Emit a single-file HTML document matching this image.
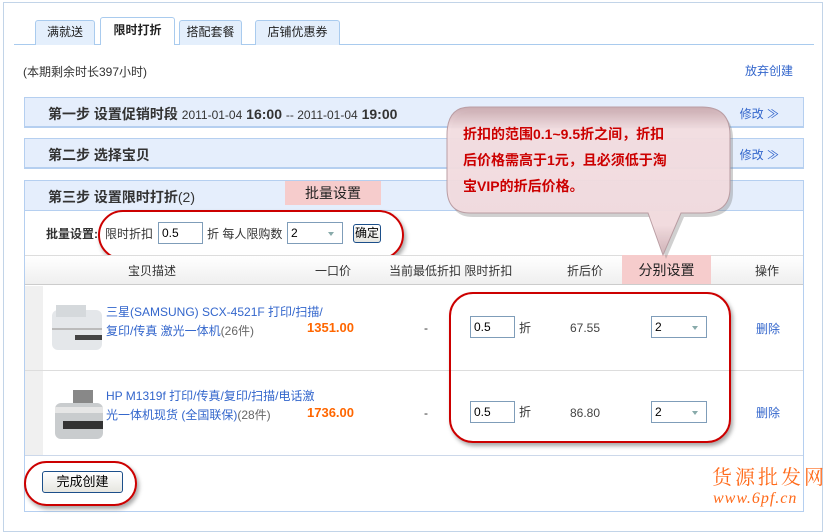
<!DOCTYPE html>
<html><head><meta charset="utf-8"><style>
*{margin:0;padding:0;box-sizing:border-box}
body{width:828px;height:519px;background:#fff;position:relative;overflow:hidden;font-family:"Liberation Sans","Noto Sans CJK SC",sans-serif;font-size:12px;color:#333}
.a{position:absolute;white-space:nowrap}
.tab{position:absolute;top:20px;height:25px;border:1px solid #a9cbee;border-bottom:none;background:#e4effc;border-radius:3px 3px 0 0;text-align:center;line-height:22px;font-size:12px;color:#222}
.step{position:absolute;left:24px;width:780px;height:31px;background:#e5eefc;border:1px solid #b5cff0;border-bottom:2px solid #b5cff0}
.step b{position:absolute;left:23px;top:6px;font-size:14px;color:#333}
.mod{position:absolute;right:24px;top:7px;color:#3366cc;font-size:12px}
.lnk{color:#3366cc}
.inp{position:absolute;height:22px;border:1px solid #7f9db9;background:#fff;padding-left:3px;line-height:20px;font-size:12px;color:#000}
.sel{position:absolute;height:22px;border:1px solid #7f9db9;background:#fff;padding-left:3px;line-height:20px;font-size:12px;color:#000}
.sel:after{content:"";position:absolute;right:8px;top:9px;border:3px solid transparent;border-top:4px solid #8aa;}
.oval{position:absolute;border:2px solid #c00;box-shadow:2px 3px 4px rgba(0,0,0,.35)}
.hl{position:absolute;background:#f6cccc;font-size:14px;color:#222;text-align:center}
.btn{position:absolute;border:1px solid #1c4f8a;border-radius:3px;background:linear-gradient(#fff,#e6e6e0);text-align:center;color:#000}
</style></head><body>
<div class="a" style="left:3px;top:2px;width:820px;height:530px;border:1px solid #c2d4e8"></div>
<div class="a" style="left:14px;top:44px;width:800px;height:1px;background:#a9cbee"></div>
<div class="tab" style="left:35px;width:60px">满就送</div>
<div class="tab" style="left:100px;width:75px;top:17px;height:28px;background:#fff;font-weight:bold;line-height:24px">限时打折</div>
<div class="tab" style="left:179px;width:63px">搭配套餐</div>
<div class="tab" style="left:255px;width:85px">店铺优惠券</div>
<div class="a" style="left:23px;top:63px;color:#333">(本期剩余时长397小时)</div>
<div class="a lnk" style="left:745px;top:62px">放弃创建</div>

<div class="step" style="top:97px"><b>第一步 设置促销时段 <span style="font-weight:normal;font-size:12px">2011-01-04</span> 16:00 <span style="font-weight:normal;font-size:12px">-- 2011-01-04</span> 19:00</b><span class="mod">修改 ≫</span></div>
<div class="step" style="top:138px"><b>第二步 选择宝贝</b><span class="mod">修改 ≫</span></div>
<div class="a" style="left:24px;top:180px;width:780px;height:332px;border:1px solid #b5cff0"></div>
<div class="step" style="top:180px;border-bottom:1px solid #b5cff0;height:31px"><b style="font-weight:bold">第三步 设置限时打折<span style="font-weight:normal">(2)</span></b></div>
<div class="hl" style="left:285px;top:181px;width:96px;height:24px;line-height:24px">批量设置</div>

<div class="a" style="left:46px;top:225px;font-weight:bold">批量设置:</div>
<div class="a" style="left:105px;top:225px">限时折扣</div>
<div class="inp" style="left:158px;top:222px;width:45px">0.5</div>
<div class="a" style="left:207px;top:225px">折 每人限购数</div>
<div class="sel" style="left:287px;top:222px;width:56px">2</div>
<div class="btn" style="left:353px;top:224px;width:28px;height:19px;line-height:17px;font-size:12px">确定</div>
<div class="oval" style="left:98px;top:210px;width:306px;height:50px;border-radius:25px"></div>

<div class="a" style="left:25px;top:255px;width:778px;height:30px;border-top:1px solid #ddd;border-bottom:1px solid #ccc;background:linear-gradient(#fff,#efefef)"></div>
<div class="a" style="left:128px;top:262px">宝贝描述</div>
<div class="a" style="left:315px;top:262px">一口价</div>
<div class="a" style="left:389px;top:262px">当前最低折扣 限时折扣</div>
<div class="a" style="left:567px;top:262px">折后价</div>
<div class="hl" style="left:622px;top:255px;width:89px;height:29px;line-height:30px">分别设置</div>
<div class="a" style="left:755px;top:262px">操作</div>

<div class="a" style="left:25px;top:286px;width:18px;height:169px;background:#f0f0f0"></div>
<div class="a" style="left:25px;top:370px;width:778px;height:1px;background:#ddd"></div>
<div class="a" style="left:25px;top:455px;width:778px;height:1px;background:#ccd8ea"></div>

<svg class="a" style="left:50px;top:300px" width="52" height="54"><rect x="2" y="10" width="50" height="40" rx="6" fill="#e4e7ea"/><rect x="6" y="5" width="30" height="12" fill="#d5d9dc"/><rect x="25" y="35" width="27" height="5" fill="#444"/><rect x="2" y="28" width="50" height="2" fill="#bbb"/></svg>
<svg class="a" style="left:55px;top:385px" width="48" height="54"><rect x="18" y="5" width="20" height="14" fill="#888"/><rect x="0" y="18" width="48" height="36" rx="6" fill="#c9ccce"/><rect x="8" y="36" width="40" height="8" fill="#333"/><rect x="0" y="22" width="48" height="6" fill="#e6e6e6"/></svg>

<div class="a lnk" style="left:106px;top:303px;line-height:19px">三星(SAMSUNG) SCX-4521F 打印/扫描/<br>复印/传真 激光一体机<span style="color:#666">(26件)</span></div>
<div class="a" style="left:307px;top:320px;color:#ff6600;font-weight:bold;font-size:13px">1351.00</div>
<div class="a lnk" style="left:106px;top:387px;line-height:19px">HP M1319f 打印/传真/复印/扫描/电话激<br>光一体机现货 (全国联保)<span style="color:#666">(28件)</span></div>
<div class="a" style="left:307px;top:405px;color:#ff6600;font-weight:bold;font-size:13px">1736.00</div>

<div class="a" style="left:424px;top:321px">-</div>
<div class="inp" style="left:470px;top:316px;width:45px">0.5</div>
<div class="a" style="left:519px;top:319px">折</div>
<div class="a" style="left:570px;top:321px;color:#444">67.55</div>
<div class="sel" style="left:651px;top:316px;width:56px">2</div>
<div class="a lnk" style="left:756px;top:320px">删除</div>

<div class="a" style="left:424px;top:406px">-</div>
<div class="inp" style="left:470px;top:401px;width:45px">0.5</div>
<div class="a" style="left:519px;top:403px">折</div>
<div class="a" style="left:570px;top:406px;color:#444">86.80</div>
<div class="sel" style="left:651px;top:401px;width:56px">2</div>
<div class="a lnk" style="left:756px;top:404px">删除</div>
<div class="oval" style="left:449px;top:292px;width:282px;height:151px;border-radius:24px"></div>

<div class="btn" style="left:42px;top:471px;width:81px;height:22px;line-height:20px;font-size:13px">完成创建</div>
<div class="oval" style="left:24px;top:461px;width:113px;height:45px;border-radius:23px"></div>

<svg class="a" style="left:440px;top:100px" width="300" height="165">
<defs><linearGradient id="g" x1="0" y1="0" x2="0" y2="1"><stop offset="0" stop-color="#c9a9ae"/><stop offset=".15" stop-color="#f4dfe2"/><stop offset=".8" stop-color="#f3dcdf"/><stop offset="1" stop-color="#cfb1b6"/></linearGradient></defs>
<path d="M30 7 H262 Q290 7 290 35 V88 Q290 113 262 113 H241 L223 155 L208 113 H30 Q7 113 7 88 V35 Q7 7 30 7 Z" fill="#777" opacity=".35" transform="translate(3,4)"/>
<path d="M30 7 H262 Q290 7 290 35 V88 Q290 113 262 113 H241 L223 155 L208 113 H30 Q7 113 7 88 V35 Q7 7 30 7 Z" fill="url(#g)" stroke="#b89aa0" opacity=".95"/>
</svg>
<div class="a" style="left:463px;top:121px;color:#cc0000;font-weight:bold;font-size:14px;line-height:26px">折扣的范围0.1~9.5折之间，折扣<br>后价格需高于1元，且必须低于淘<br>宝VIP的折后价格。</div>

<div class="a" style="left:712px;top:461px;color:#ff6a1a;font-size:20px;letter-spacing:3px;font-family:'Liberation Serif','Noto Serif CJK SC',serif">货源批发网</div>
<div class="a" style="left:713px;top:490px;color:#ff6a1a;font-size:16px;letter-spacing:1px;font-style:italic;font-family:'Liberation Serif',serif">www.6pf.cn</div>
</body></html>
